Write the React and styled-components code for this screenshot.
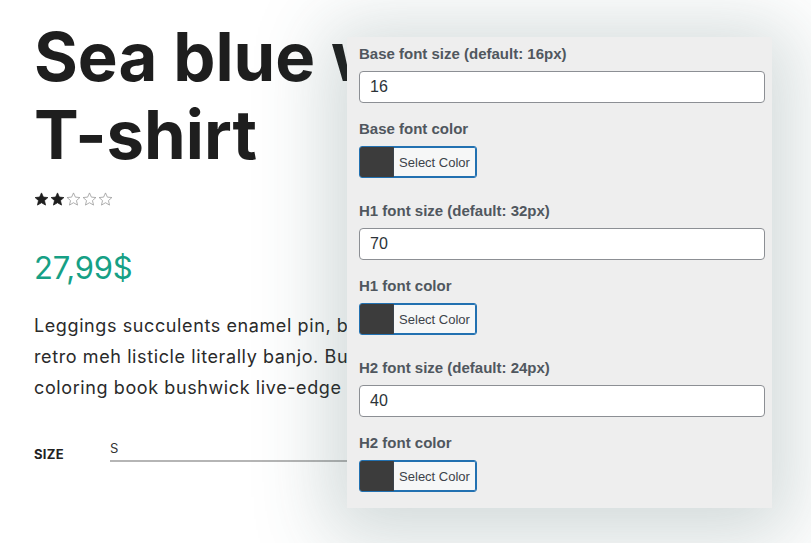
import React from 'react';
import styled, { createGlobalStyle } from 'styled-components';

const GlobalStyle = createGlobalStyle`
  html, body {
    margin: 0;
    padding: 0;
    background: #ffffff;
    overflow: hidden;
  }
`;

const Page = styled.div`
  position: relative;
  width: 811px;
  height: 543px;
  overflow: hidden;
  background: #fff;
`;

const Product = styled.div`
  display: flex;
  flex-direction: column;
  box-sizing: border-box;
  width: 347px;
  overflow: hidden;
  padding: 18px 0 0 34px;
  font-family: Inter, "Open Sans", sans-serif;
  color: #1f1f1f;
  white-space: nowrap;
`;

const Title = styled.h1`
  margin: 0;
  font-size: 67px;
  line-height: 78px;
  font-weight: 700;
  color: #1e1e1e;
`;

const Stars = styled.div`
  display: flex;
  gap: 1px;
  margin-top: 18px;
`;

const Price = styled.div`
  margin-top: 43px;
  font-size: 31px;
  font-weight: 400;
  color: #16a085;
  letter-spacing: -0.2px;
`;

const Description = styled.p`
  margin: 24px 0 0;
  font-size: 18px;
  line-height: 31px;
  letter-spacing: 0.6px;
  color: #2a2a2a;
`;

const SizeRow = styled.div`
  display: flex;
  align-items: flex-end;
  margin-top: 38px;
`;

const SizeLabel = styled.span`
  width: 76px;
  font-size: 13px;
  line-height: 16px;
  font-weight: 700;
  letter-spacing: 0.3px;
  color: #222;
`;

const SizeSelect = styled.div`
  flex: 1;
  padding: 0 0 4px 0;
  border-bottom: 2px solid #b5b5b5;
  font-size: 13px;
  line-height: 15px;
  color: #333;
`;

const Panel = styled.div`
  position: absolute;
  left: 347px;
  top: 37px;
  width: 425px;
  height: 471px;
  box-sizing: border-box;
  padding: 6px 7px 0 12px;
  background: #eeeeee;
  box-shadow: 0 10px 70px 20px rgba(50, 85, 85, 0.22);
  font-family: "Liberation Sans", Arial, sans-serif;
  display: flex;
  flex-direction: column;
`;

const Field = styled.div`
  display: flex;
  flex-direction: column;
  margin-bottom: ${(p) => p.$gap}px;
`;

const Label = styled.label`
  font-size: 15px;
  font-weight: 700;
  color: #50575e;
  line-height: 22px;
  margin-bottom: 6px;
`;

const Input = styled.div`
  height: 32px;
  box-sizing: border-box;
  border: 1px solid #8c8f94;
  border-radius: 4px;
  background: #fff;
  padding: 0 10px;
  display: flex;
  align-items: center;
  font-size: 16px;
  color: #2c3338;
`;

const ColorButton = styled.div`
  display: flex;
  align-self: flex-start;
  width: 118px;
  height: 32px;
  box-sizing: border-box;
  border: 1px solid #2271b1;
  border-radius: 3px;
  overflow: hidden;
  background: #f6f7f7;
  box-shadow: 0 0 0 1px #2271b1 inset;
`;

const Swatch = styled.span`
  width: 33px;
  background: ${(p) => p.$color};
  border-right: 1px solid #3c434a;
`;

const ButtonText = styled.span`
  flex: 1;
  display: flex;
  align-items: center;
  justify-content: center;
  font-size: 13px;
  color: #3c434a;
  background: #f6f7f7;
  margin: 1px 1px 1px 0;
  border-radius: 0 2px 2px 0;
`;

const Star = ({ filled }) => (
  <svg width="15" height="14" viewBox="0 0 24 23">
    <path
      d="M12 1.5l3.1 6.9 7.4.7-5.6 5 1.7 7.4L12 17.6l-6.6 3.9 1.7-7.4-5.6-5 7.4-.7z"
      fill={filled ? '#1e1e1e' : '#fff'}
      stroke={filled ? '#1e1e1e' : '#999'}
      strokeWidth="1.3"
      strokeLinejoin="round"
    />
  </svg>
);

const fields = [
  { type: 'size', label: 'Base font size (default: 16px)', value: '16', gap: 15 },
  { type: 'color', label: 'Base font color', color: '#3c3c3c', gap: 22 },
  { type: 'size', label: 'H1 font size (default: 32px)', value: '70', gap: 15 },
  { type: 'color', label: 'H1 font color', color: '#3c3c3c', gap: 22 },
  { type: 'size', label: 'H2 font size (default: 24px)', value: '40', gap: 15 },
  { type: 'color', label: 'H2 font color', color: '#3c3c3c', gap: 0 },
];

export default function App() {
  return (
    <Page>
      <GlobalStyle />
      <Product>
        <Title>
          Sea blue women's
          <br />
          T-shirt
        </Title>
        <Stars>
          {[0, 1, 2, 3, 4].map((i) => (
            <Star key={i} filled={i < 2} />
          ))}
        </Stars>
        <Price>27,99$</Price>
        <Description>
          Leggings succulents enamel pin, banh mi
          <br />
          retro meh listicle literally banjo. Butcher
          <br />
          coloring book bushwick live-edge chia.
        </Description>
        <SizeRow>
          <SizeLabel>SIZE</SizeLabel>
          <SizeSelect>S</SizeSelect>
        </SizeRow>
      </Product>
      <Panel>
        {fields.map((f) => (
          <Field key={f.label} $gap={f.gap}>
            <Label>{f.label}</Label>
            {f.type === 'size' ? (
              <Input>{f.value}</Input>
            ) : (
              <ColorButton>
                <Swatch $color={f.color} />
                <ButtonText>Select Color</ButtonText>
              </ColorButton>
            )}
          </Field>
        ))}
      </Panel>
    </Page>
  );
}
